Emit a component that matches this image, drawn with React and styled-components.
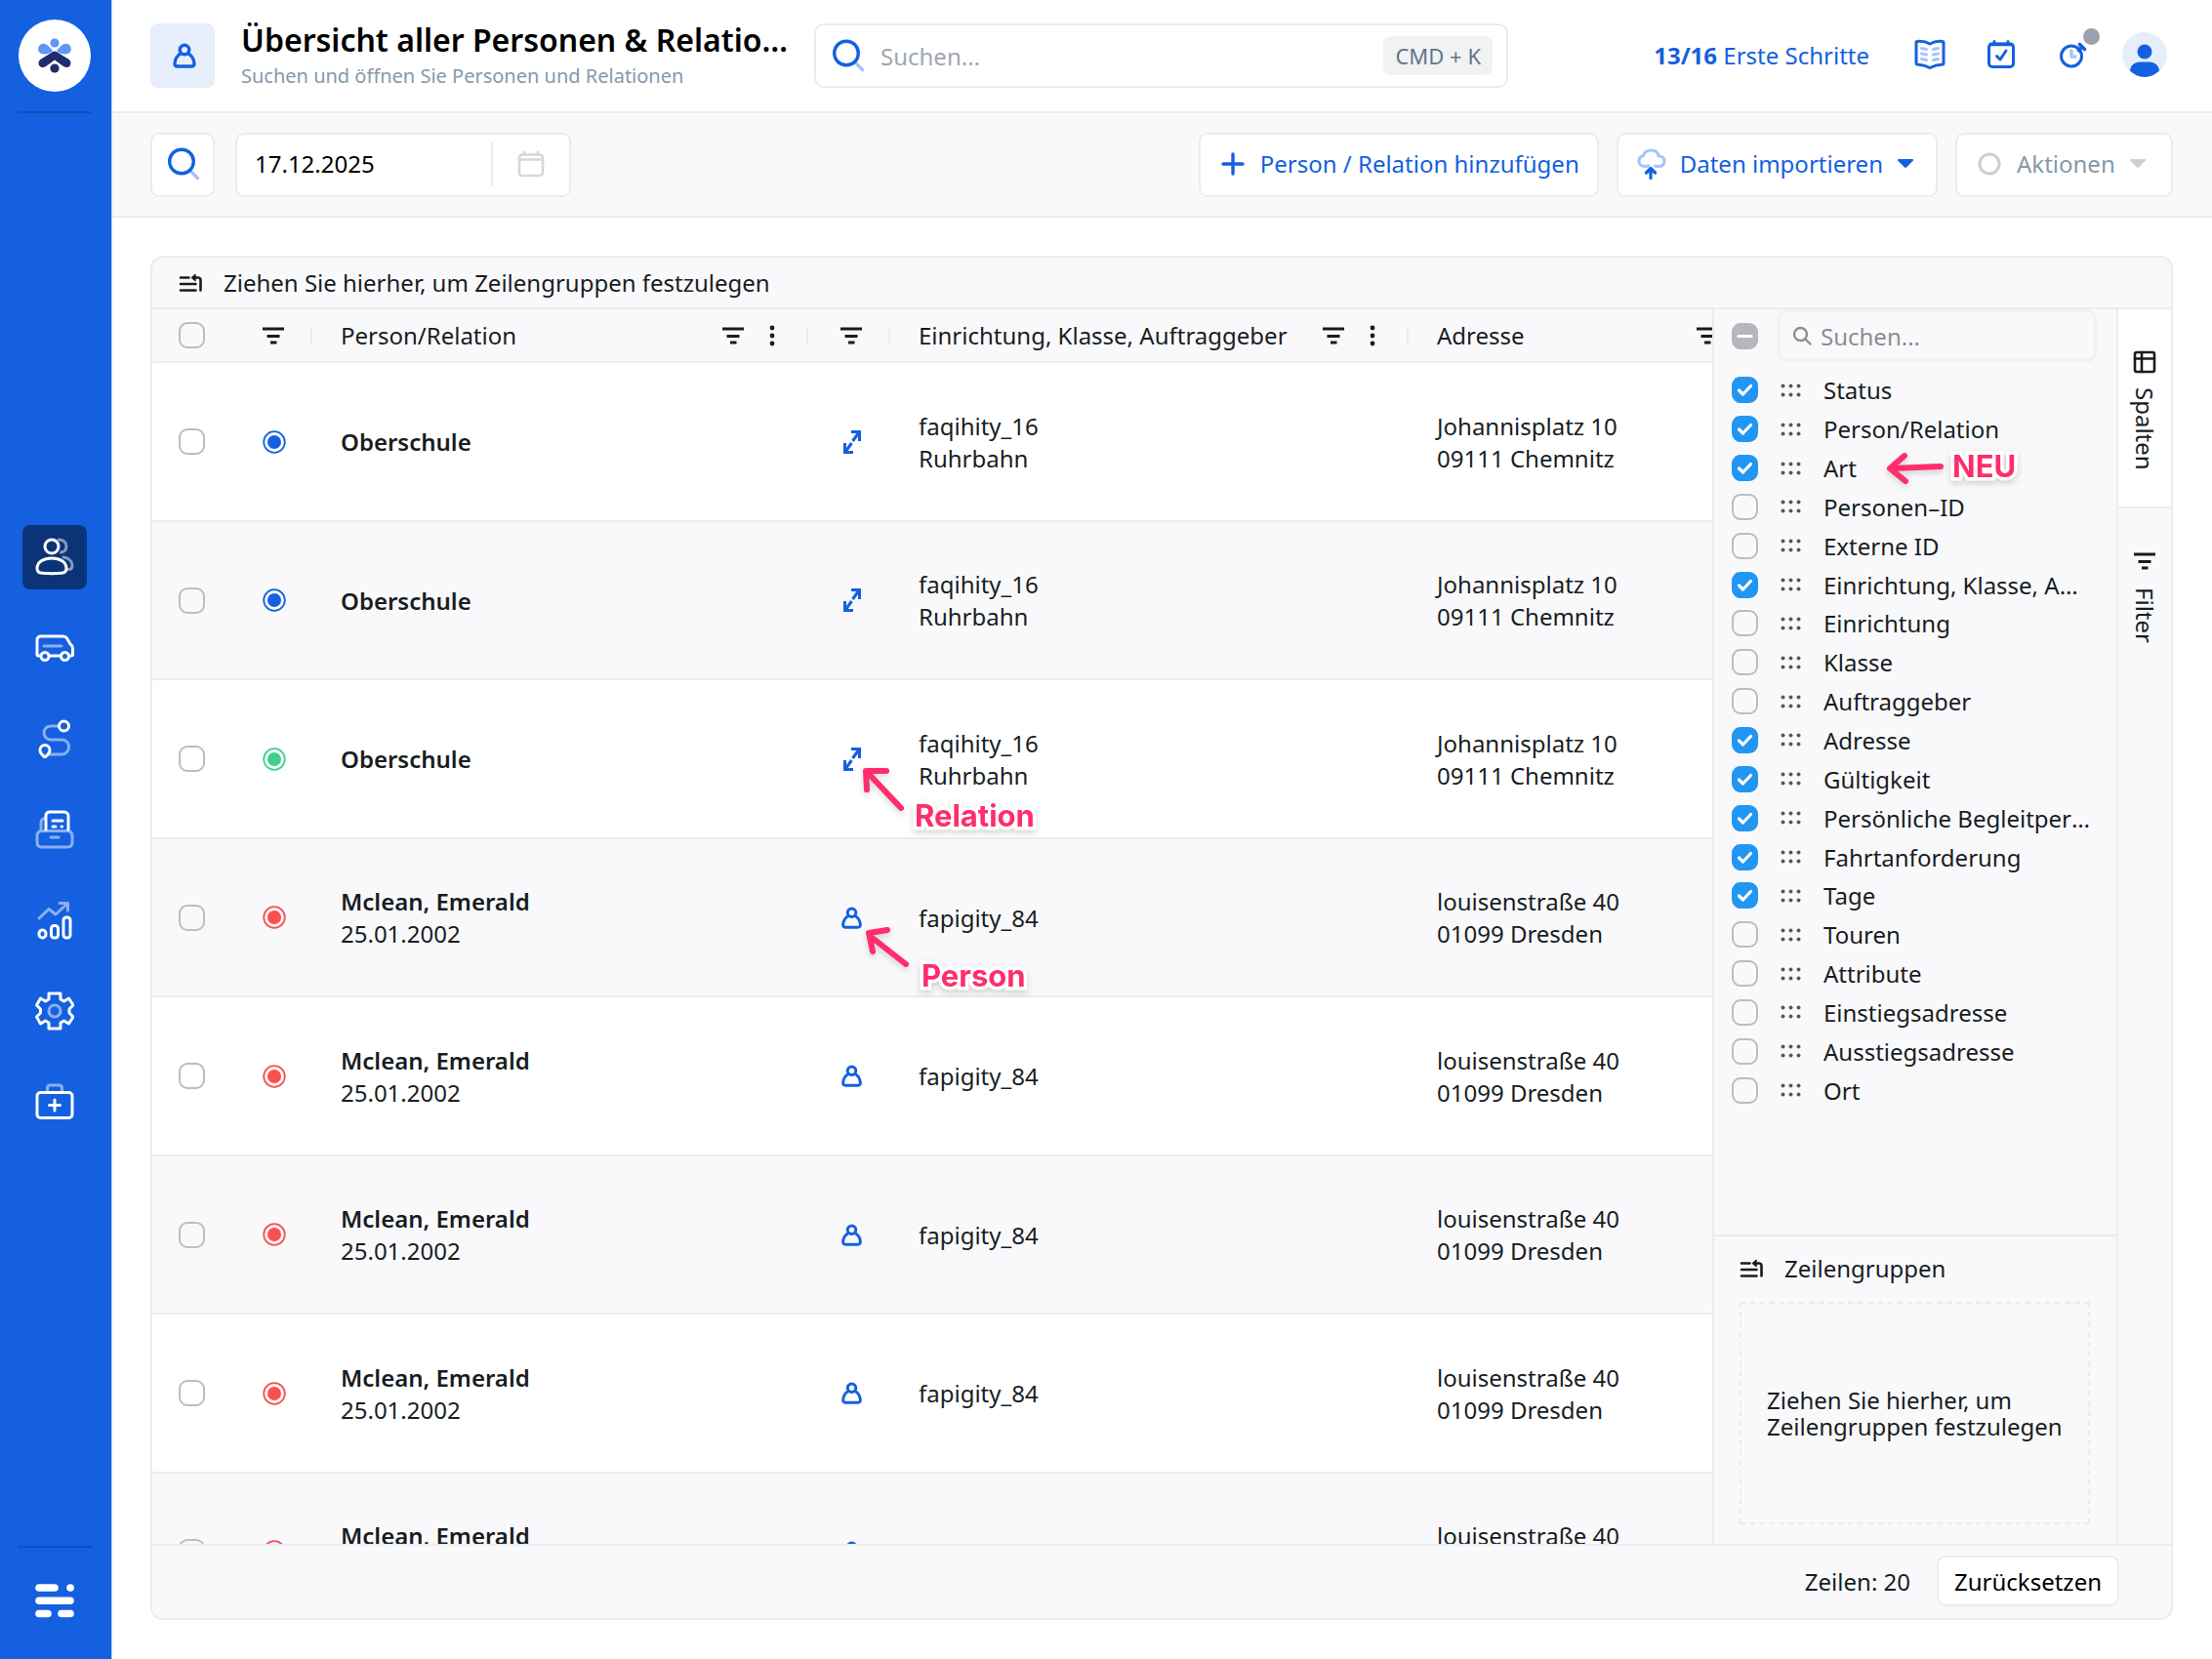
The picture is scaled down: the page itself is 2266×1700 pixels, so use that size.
import React from "react";
import styled, { createGlobalStyle, css } from "styled-components";

const blue = "#1460e0";
const softBlue = "#a7c4f8";
const ink = "#181d1f";
const line = "#ececef";
const panel = "#f9f9fb";
const muted = "#8598ab";
const pink = "#ff2d6b";

const GlobalStyle = createGlobalStyle`
  * {
    box-sizing: border-box;
  }
  body {
    margin: 0;
    background: #fff;
  }
  body,
  button,
  input {
    font-family: "Noto Sans", "Open Sans", sans-serif;
    font-size: 24px;
    line-height: 33px;
    color: ${ink};
  }
  button {
    cursor: pointer;
  }
  svg {
    display: block;
    flex: none;
  }
`;

const Page = styled.div`
  display: flex;
  height: 100vh;
  min-height: 1200px;
`;

// ---------- Sidebar ----------

const Sidebar = styled.aside`
  display: flex;
  flex-direction: column;
  align-items: center;
  flex: none;
  width: 115px;
  padding: 20px 2px 42px 0;
  background: ${blue};
  border-right: 1px solid #b9cff6;
`;

const LogoLink = styled.a`
  display: flex;
  align-items: center;
  justify-content: center;
  width: 74px;
  height: 74px;
  border-radius: 50%;
  background: #fff;
`;

const Rule = styled.hr`
  width: 76px;
  height: 2px;
  margin: 20px 0 0;
  border: 0;
  background: #114fb9;
`;

const Nav = styled.nav`
  display: flex;
  flex: 1;
  flex-direction: column;
  justify-content: center;
  gap: 27px;
  padding-top: 20px;
`;

const NavLink = styled.a`
  display: flex;
  align-items: center;
  justify-content: center;
  width: 66px;
  height: 66px;
  border-radius: 8px;
  background: ${(props) => (props.$active ? "#0b3478" : "transparent")};
`;

const MenuButton = styled.button`
  padding: 36px 0 0;
  border: 0;
  background: none;
`;

// ---------- Header ----------

const Main = styled.main`
  display: flex;
  flex: 1;
  flex-direction: column;
  min-width: 0;
`;

const Header = styled.header`
  display: flex;
  align-items: center;
  flex: none;
  height: 116px;
  padding: 0 46px 0 39px;
  border-bottom: 2px solid ${line};
`;

const PageIcon = styled.div`
  display: flex;
  align-items: center;
  justify-content: center;
  flex: none;
  width: 66px;
  height: 66px;
  margin-right: 27px;
  padding-left: 4px;
  border-radius: 8px;
  background: #e6eefb;
`;

const Titles = styled.div`
  width: 562px;
  margin-right: 25px;
  padding-bottom: 2px;
`;

const Title = styled.h1`
  overflow: hidden;
  margin: 0;
  font-size: 32px;
  font-weight: 600;
  line-height: 44px;
  color: #000;
  white-space: nowrap;
  text-overflow: ellipsis;
`;

const Subtitle = styled.p`
  margin: 0;
  font-size: 20px;
  line-height: 30px;
  color: ${muted};
  white-space: nowrap;
`;

const GlobalSearch = styled.label`
  display: flex;
  align-items: center;
  gap: 16px;
  width: 711px;
  height: 66px;
  padding: 0 14px 0 16px;
  border: 2px solid ${line};
  border-radius: 10px;
`;

const BareInput = styled.input`
  flex: 1;
  min-width: 0;
  padding: 0;
  border: 0;
  outline: 0;
  background: none;
  color: ${(props) => props.$color || ink};
  &::placeholder {
    color: ${(props) => props.$hint || "#a0a6b2"};
    opacity: 1;
  }
`;

const Kbd = styled.kbd`
  padding: 4px 12px;
  border-radius: 8px;
  background: #f0f2f4;
  font-family: inherit;
  font-size: 22px;
  line-height: 32px;
  color: #64748b;
`;

const HeaderActions = styled.div`
  display: flex;
  align-items: center;
  gap: 41px;
  margin-left: auto;
  padding-bottom: 2px;
`;

const StepsLink = styled.a`
  margin-right: 5px;
  color: ${blue};
  text-decoration: none;
  white-space: nowrap;
  strong {
    font-weight: 700;
  }
`;

const IconButton = styled.button`
  display: flex;
  align-items: center;
  justify-content: center;
  position: relative;
  width: 32px;
  height: 46px;
  padding: 0;
  border: 0;
  background: none;
  &:last-of-type {
    margin-right: -6px;
  }
`;

const Dot = styled.span`
  position: absolute;
  top: -4px;
  right: -12px;
  width: 17px;
  height: 17px;
  border-radius: 50%;
  background: #9ca1af;
`;

// ---------- Toolbar ----------

const Toolbar = styled.div`
  display: flex;
  align-items: center;
  flex: none;
  gap: 18px;
  height: 107px;
  padding: 0 40px 0 39px;
  border-bottom: 2px solid ${line};
  background: ${panel};
`;

const box = css`
  height: 66px;
  border: 2px solid ${line};
  border-radius: 9px;
  background: #fff;
`;

const ToolButton = styled.button`
  ${box}
  display: flex;
  align-items: center;
  gap: 14px;
  min-width: 223px;
  padding: 0 ${(props) => (props.$menu ? "22px" : "18px")} 2px 19px;
  color: ${(props) => (props.disabled ? muted : blue)};
  white-space: nowrap;
`;

const SquareButton = styled.button`
  ${box}
  display: flex;
  align-items: center;
  justify-content: center;
  width: 66px;
  padding: 0 0 2px 2px;
`;

const DateField = styled.label`
  ${box}
  display: flex;
  align-items: center;
  width: 344px;
  margin: 0 auto 0 3px;
  padding: 0 0 2px 18px;
`;

const DateIcon = styled.span`
  display: flex;
  justify-content: center;
  width: 80px;
  padding: 8px 0;
  border-left: 2px solid ${line};
`;

// ---------- Grid ----------

const Content = styled.section`
  display: flex;
  flex: 1;
  min-height: 0;
  padding: 39px 40px 40px 39px;
`;

const Card = styled.div`
  display: flex;
  flex: 1;
  flex-direction: column;
  min-width: 0;
  overflow: hidden;
  border: 2px solid ${line};
  border-radius: 13px;
  background: ${panel};
`;

const GroupBar = styled.div`
  display: flex;
  align-items: center;
  flex: none;
  gap: 21px;
  height: 53px;
  padding-left: 27px;
  border-bottom: 2px solid ${line};
`;

const GridBody = styled.div`
  display: flex;
  flex: 1;
  min-height: 0;
`;

const Viewport = styled.div`
  flex: 1;
  min-width: 0;
  overflow: hidden;
`;

const Table = styled.table`
  width: 1668px;
  border-spacing: 0;
  table-layout: fixed;
`;

const HeadCell = styled.th`
  height: 55px;
  padding: 0;
  border-bottom: 2px solid ${line};
  font-weight: 400;
  text-align: left;
`;

const HeadInner = styled.div`
  display: flex;
  align-items: center;
  justify-content: ${(props) => (props.$center ? "center" : "space-between")};
  height: 18px;
  padding: ${(props) => (props.$center ? "0" : "0 32px 0 29px")};
  padding-left: ${(props) => props.$center && props.$divided && "6px"};
  border-right: ${(props) => (props.$divided ? `2px solid ${line}` : "0")};
  white-space: nowrap;
`;

const HeadIcons = styled.span`
  display: flex;
  align-items: center;
  gap: 25px;
`;

const Row = styled.tr`
  height: 163px;
  background: #fff;
  &:nth-child(even) {
    height: 162px;
    background: ${panel};
  }
`;

const Cell = styled.td`
  padding: 0 0 0 29px;
  border-bottom: 2px solid ${line};
  vertical-align: middle;
`;

const CheckCell = styled(Cell)`
  padding: 0;
`;

const IconCell = styled(Cell)`
  padding: 0 0 0 5px;
`;

const Centered = styled.div`
  display: flex;
  justify-content: center;
  position: relative;
`;

const Strong = styled.strong`
  font-weight: 600;
`;

// ---------- Check box ----------

const CheckStack = styled.span`
  display: inline-grid;
  flex: none;
  vertical-align: middle;
  > * {
    grid-area: 1 / 1;
  }
  svg {
    z-index: 1;
    pointer-events: none;
  }
`;

const CheckInput = styled.input`
  appearance: none;
  width: 27px;
  height: 27px;
  margin: 0;
  border: 2px solid #bcbdc0;
  border-radius: 9px;
  background: transparent;
  &:checked {
    border-color: #2196f3;
    background: #2196f3;
  }
  &:indeterminate {
    border-color: #b6b7ba;
    background: #b6b7ba;
  }
`;

// ---------- Column panel ----------

const ColumnPanel = styled.div`
  display: flex;
  flex: none;
  flex-direction: column;
  width: 416px;
  border-left: 2px solid ${line};
  border-right: 2px solid ${line};
`;

const PanelSearchRow = styled.div`
  display: flex;
  align-items: center;
  flex: none;
  gap: 20px;
  height: 54px;
  padding: 0 20px 0 18px;
`;

const PanelSearch = styled.label`
  display: flex;
  align-items: center;
  flex: 1;
  gap: 9px;
  min-width: 0;
  height: 54px;
  padding: 0 12px;
  border: 3px solid #f0f1f3;
  border-radius: 9px;
`;

const ColumnList = styled.ul`
  display: grid;
  grid-auto-rows: 1fr;
  flex: none;
  height: 757px;
  margin: 9px 0 0;
  padding: 0 20px 0 18px;
  list-style: none;
`;

const ColumnItem = styled.li`
  display: flex;
  align-items: center;
  position: relative;
`;

const ColumnLabel = styled.label`
  display: flex;
  align-items: center;
  gap: 23px;
  min-width: 0;
`;

const ColumnName = styled.span`
  width: 275px;
  overflow: hidden;
  white-space: nowrap;
  text-overflow: ellipsis;
`;

const GroupSection = styled.div`
  display: flex;
  flex-direction: column;
  height: 317px;
  margin-top: auto;
  padding: 16px 27px 20px 26px;
  border-top: 2px solid ${line};
`;

const GroupTitle = styled.div`
  display: flex;
  align-items: center;
  gap: 21px;
`;

const DropZone = styled.div`
  display: flex;
  align-items: center;
  flex: 1;
  margin-top: 18px;
  padding: 0 26px;
  border: 2px dashed ${line};
  line-height: 27px;
`;

const Tabs = styled.div`
  flex: none;
  width: 54px;
`;

const Tab = styled.button`
  display: flex;
  align-items: center;
  gap: ${(props) => (props.$active ? "14px" : "18px")};
  width: 54px;
  height: ${(props) => (props.$active ? "204px" : "182px")};
  padding: ${(props) => (props.$active ? "42px" : "45px")} 0 0;
  border: 0;
  border-bottom: ${(props) => (props.$active ? `2px solid ${line}` : "0")};
  background: ${(props) => (props.$active ? "#fff" : "transparent")};
  writing-mode: vertical-rl;
`;

const Footer = styled.footer`
  display: flex;
  align-items: center;
  justify-content: flex-end;
  flex: none;
  gap: 27px;
  height: 76px;
  padding: 0 53px 2px 0;
  border-top: 2px solid ${line};
`;

const ResetButton = styled.button`
  height: 52px;
  padding: 0 16px;
  border: 2px solid ${line};
  border-radius: 9px;
  background: #fff;
  color: #000;
`;

// ---------- Callouts ----------

const Callout = styled.span`
  position: absolute;
  top: ${(props) => props.$top}px;
  left: ${(props) => props.$left}px;
  z-index: 1;
  filter: drop-shadow(0 3px 3px rgba(0, 0, 0, 0.16));
  pointer-events: none;
`;

const CalloutText = styled(Callout)`
  font-family: Inter, sans-serif;
  font-size: 31px;
  font-weight: 700;
  line-height: 38px;
  color: ${pink};
  paint-order: stroke fill;
  -webkit-text-stroke: 7px #fff;
`;

// ---------- Icons ----------

function Stroke({ w, h, color = "currentColor", width = 3, children, ...rest }) {
  return (
    <svg
      width={w}
      height={h}
      viewBox={`0 0 ${w} ${h}`}
      fill="none"
      stroke={color}
      strokeWidth={width}
      strokeLinecap="round"
      strokeLinejoin="round"
      aria-hidden="true"
      {...rest}
    >
      {children}
    </svg>
  );
}

const LogoMark = () => (
  <svg width="36" height="36" viewBox="0 0 36 36" aria-hidden="true">
    <g fill="#5f97f6">
      <circle cx="18" cy="5" r="4.6" />
      <path d="M3 7c3-2.500 7-1 9.500 2l3.500 4c-2 2.500-5.500 3.500-9 3.500C1 16.500-.5 10 3 7z" />
      <path d="M33 7c-3-2.500-7-1-9.500 2L20 13c2 2.500 5.500 3.500 9 3.500C35 16.500 36.500 10 33 7z" />
    </g>
    <g fill="#1f2b6c">
      <path d="M18 13.500c2 0 3 1 5 2.500l9 5.500c3 2 3 5 1.500 7-1.500 2-4.500 2-6.500.5L18 22.500 9 29c-2 1.500-5 1.500-6.500-.5S1 23.500 4 21.500L13 16c2-1.500 3-2.500 5-2.500z" />
      <circle cx="18" cy="31" r="4.600" />
    </g>
  </svg>
);

const PersonIcon = ({ w = 26 }) => (
  <svg width={w} height={w} viewBox="0 0 26 26" fill="none" stroke={blue} strokeWidth="3.400" strokeLinejoin="round" aria-hidden="true">
    <circle cx="13" cy="7" r="4.800" />
    <path d="M9.500 10.500C6 12.500 3.200 17 3 21c-.1 2 1 3 2.700 3h14.600c1.700 0 2.800-1 2.700-3-.2-4-3-8.500-6.500-10.500" />
  </svg>
);

const RelationIcon = () => (
  <Stroke w={18} h={26} color={blue} strokeLinejoin="miter" strokeLinecap="butt">
    <path d="M8 2.500h8.500V12M16 3l-6.500 9M10 23.500H1.500V14M2 23l6.500-9" />
  </Stroke>
);

const SearchIcon = ({ size = 34 }) => (
  <svg width={size} height={size} viewBox="0 0 34 34" fill="none" strokeWidth="3.400" strokeLinecap="round" aria-hidden="true">
    <path d="M24.500 24.500l7 7" stroke={softBlue} />
    <circle cx="15" cy="14.500" r="12.300" stroke={blue} />
  </svg>
);

const SmallSearchIcon = () => (
  <Stroke w={20} h={20} color="#8b8e91" width={2.4}>
    <circle cx="8.500" cy="8.500" r="6.500" />
    <path d="M13.500 13.500l5 5" />
  </Stroke>
);

const FilterIcon = () => (
  <Stroke w={24} h={18} width={2.8} strokeLinecap="butt">
    <path d="M1 2h22M5.500 9.500h13M9 16h6.500" />
  </Stroke>
);

const DotsIcon = () => (
  <svg width="6" height="22" viewBox="0 0 6 22" fill={ink} aria-hidden="true">
    <circle cx="3" cy="3" r="2.400" />
    <circle cx="3" cy="11" r="2.400" />
    <circle cx="3" cy="19" r="2.400" />
  </svg>
);

const GroupIcon = () => (
  <Stroke w={25} h={20} width={2.6}>
    <path d="M2 4.500h8.500M2 11h15.500M2 17.500h15.500M22.500 17.500V7c0-1.600-1-2.500-2.500-2.500h-3.500" />
    <path d="M13.500 4.500L17 1.500v6z" fill="currentColor" strokeWidth="1.500" />
  </Stroke>
);

const HandleIcon = () => (
  <svg width="21" height="14" viewBox="0 0 21 14" fill="#55595c" aria-hidden="true">
    {[2.5, 11.5].map((cy) => [2.5, 10.5, 18.5].map((cx) => <circle key={`${cx}-${cy}`} cx={cx} cy={cy} r="2" />))}
  </svg>
);

const StatusIcon = ({ color }) => (
  <svg width="24" height="24" viewBox="0 0 24 24" role="img" aria-label="Status">
    <circle cx="12" cy="12" r="10.800" fill="none" stroke={color} strokeWidth="1.800" />
    <circle cx="12" cy="12" r="7" fill={color} />
  </svg>
);

const Caret = ({ color }) => (
  <svg width="18" height="11" viewBox="0 0 18 11" fill={color} aria-hidden="true">
    <path d="M2 1h14c1 0 1.300 1 .7 1.700L10 9.500c-.6.600-1.400.600-2 0L1.300 2.700C.700 2 1 1 2 1z" />
  </svg>
);

const BookIcon = () => (
  <Stroke w={32} h={32} color={blue}>
    <path d="M16 5c-3.500-2-9-3-13-2.500-.8 0-1 .5-1 1.200v21c0 .8.300 1.200 1 1.300 4.500.3 9 1.300 13 3.500 4-2.200 8.500-3.200 13-3.500.7-.1 1-.5 1-1.300v-21c0-.7-.2-1.200-1-1.200C25 2 19.500 3 16 5z" />
    <path stroke={softBlue} d="M7.500 9.500l5 1M7.500 15l5 1M7.500 20.500l5 1M24.500 9.500l-5 1M24.500 15l-5 1M24.500 20.500l-5 1" />
  </Stroke>
);

const TaskIcon = () => (
  <Stroke w={30} h={32} color={blue}>
    <rect x="2.500" y="5" width="25" height="23.500" rx="3.500" />
    <path d="M8 5V2.500M22 5V2.500M10.500 17.500l3.500 3.500 6-9" />
    <path d="M4 5.500h22" strokeWidth="3.500" />
  </Stroke>
);

const TimerIcon = () => (
  <Stroke w={30} h={32} color={blue}>
    <circle cx="14" cy="17.500" r="10.500" />
    <path d="M22.500 5.500l5 5M25 8l-3.500 3.500" strokeWidth="3.600" />
    <path d="M14 12v6h4" stroke={softBlue} strokeWidth="3.400" />
  </Stroke>
);

const Avatar = () => (
  <svg width="46" height="46" viewBox="0 0 46 46" role="img" aria-label="Profil">
    <circle cx="23" cy="23" r="23" fill="#e6eefb" />
    <circle cx="23" cy="20" r="7.500" fill={blue} />
    <path d="M8 39.500C8.500 34 12.500 30.500 18 30.500h10c5.500 0 9.500 3.500 10 9A23 23 0 0 1 23 46a23 23 0 0 1-15-6.500z" fill={blue} />
  </svg>
);

const CalendarIcon = () => (
  <Stroke w={28} h={28} color="#d6d7d9" width={2.6}>
    <rect x="2" y="4.500" width="24" height="21.500" rx="3" />
    <path d="M7 4V1.500M21 4V1.500M2.500 9.500h23" />
  </Stroke>
);

const PlusIcon = () => (
  <Stroke w={28} h={26} color={blue} width={3.4}>
    <path d="M14 3v20M4 13h20" />
  </Stroke>
);

const CloudIcon = () => (
  <Stroke w={30} h={32} color={softBlue} width={3.2}>
    <path d="M8 18.500c-4 0-6-2.500-6-5.500s2-5 4.500-5.500C7.500 4 10.500 2 14.500 2c4.500 0 7 2.500 7.800 6 3.700.3 5.700 2.500 5.700 5.300 0 3-2.300 5.200-6 5.200-2 0-2.500-.5-3.500-.5M8 18.500c2 0 2.500-.5 3.500-.5" />
    <path d="M14 30.500V21M9.500 25l4.500-4.500 4.500 4.500" stroke={blue} />
  </Stroke>
);

const CircleIcon = () => (
  <Stroke w={28} h={26} color="#cfcfcf">
    <circle cx="14" cy="13" r="10" />
  </Stroke>
);

const ColumnsIcon = () => (
  <Stroke w={24} h={24} width={2.6}>
    <rect x="2" y="2" width="20" height="20" rx="2" />
    <path d="M2 8.500h20M9 2v20" />
  </Stroke>
);

const MenuIcon = () => (
  <Stroke w={40} h={36} color="#fff" width={7.6}>
    <path d="M4 5h16M36 5h.1M4 18.300h32M4 31.500h9M27 31.500h9" />
  </Stroke>
);

const navIcons = [
  {
    label: "Personen",
    icon: (
      <>
        <path opacity=".5" d="M24 2c5 0 8 3 8 6.500s-2 6-5.500 6.500M29 20c5 .5 9 4 9 8.500 0 2.500-1.500 4-4 4" />
        <circle cx="17" cy="9" r="7" />
        <path d="M17 21c-8.500 0-15 4-15 10.500 0 3 2 4.500 5 4.800 6.500.6 13.500.6 20 0 3-.3 5-1.800 5-4.800C32 25 25.500 21 17 21z" />
      </>
    ),
  },
  {
    label: "Fahrzeuge",
    icon: (
      <>
        <path d="M5.500 28H3.500C2.500 28 2 27.500 2 26.500V12c0-2.500 1.500-4 4-4h22c2 0 3.500.5 4.500 2l3.500 6c1.500 1 2.500 2 2.500 4v6.500c0 1-.5 1.500-1.500 1.500h-2M15 28h11" />
        <circle cx="10" cy="28.500" r="4" />
        <circle cx="30.500" cy="28.500" r="4" />
        <path opacity=".5" d="M9 18h18" />
      </>
    ),
  },
  {
    label: "Routen",
    icon: (
      <>
        <path opacity=".5" d="M23 7H16c-4 0-7 3-7 7s3 7 7 7h11c4.500 0 7.500 3 7.500 7.200S31.500 36 27 36H15" />
        <circle cx="29.500" cy="7" r="5" />
        <path d="M10 39c-2.500-2-5-4.500-5-7.500a5 5 0 0 1 10 0c0 3-2.500 5.500-5 7.500z" />
      </>
    ),
  },
  {
    label: "Dokumente",
    icon: (
      <>
        <path d="M11 20V6c0-2.500 1.500-4 4-4h14c2.500 0 5 1.500 5 4v14M18 11h10M18 17h3M27 17h.5" />
        <path opacity=".5" d="M6 20v-7c0-2 1.500-4 4-4.500M2 27c0-3.500 1.500-5.500 5-5.500h26c3.500 0 5 2 5 5.500v6c0 3-1.500 5-5 5H7c-3.500 0-5-2-5-5zM16 28h8" />
      </>
    ),
  },
  {
    label: "Auswertungen",
    icon: (
      <>
        <path opacity=".5" d="M4 18l10-9.500 7 5.500L33 3M25 2.500h8.500V10" />
        <rect x="4" y="30" width="7" height="8" rx="3.500" />
        <rect x="16.500" y="25.500" width="7" height="12.500" rx="3" />
        <rect x="29" y="17" width="7" height="21" rx="3" />
      </>
    ),
  },
  {
    label: "Einstellungen",
    icon: (
      <>
        <path d="M14 2h12v6l3.500 2 5-3 4.500 7-4 4v4l4 4-4.500 7-5-3-3.500 2v6H14v-6l-3.500-2-5 3L1.500 26l4-4v-4l-4-4L5.500 7l5 3L14 8z" />
        <circle cx="20" cy="20" r="6" opacity=".5" />
      </>
    ),
  },
  {
    label: "Support",
    icon: (
      <>
        <rect x="2" y="10.500" width="36" height="26" rx="3.500" />
        <path opacity=".5" d="M12.500 10V6c0-2 1-3 3-3h9c2 0 3 1 3 3v4" />
        <path d="M20 18v11M14.500 23.500h11" />
      </>
    ),
  },
];

// ---------- Data ----------

const columns = [
  ["Status", true],
  ["Person/Relation", true],
  ["Art", true],
  ["Personen–ID", false],
  ["Externe ID", false],
  ["Einrichtung, Klasse, Auftraggeber", true],
  ["Einrichtung", false],
  ["Klasse", false],
  ["Auftraggeber", false],
  ["Adresse", true],
  ["Gültigkeit", true],
  ["Persönliche Begleitperson", true],
  ["Fahrtanforderung", true],
  ["Tage", true],
  ["Touren", false],
  ["Attribute", false],
  ["Einstiegsadresse", false],
  ["Ausstiegsadresse", false],
  ["Ort", false],
];

const school = {
  name: "Oberschule",
  relation: true,
  place: ["faqihity_16", "Ruhrbahn"],
  address: ["Johannisplatz 10", "09111 Chemnitz"],
};

const person = {
  name: "Mclean, Emerald",
  born: "25.01.2002",
  color: "#fb4f4b",
  place: ["fapigity_84"],
  address: ["louisenstraße 40", "01099 Dresden"],
};

const rows = [
  { ...school, color: blue },
  { ...school, color: blue },
  { ...school, color: "#3ecf8e", callout: "Relation" },
  { ...person, callout: "Person" },
  person,
  person,
  person,
  person,
];

// ---------- Parts ----------

function CheckBox({ mixed, ...rest }) {
  const ref = (el) => {
    if (el && mixed) el.indeterminate = true;
  };
  return (
    <CheckStack>
      <CheckInput type="checkbox" ref={ref} {...rest} />
      {(mixed || rest.defaultChecked) && (
        <Stroke w={27} h={27} color="#fff" width={3.2}>
          <path d={mixed ? "M7 13.500h13" : "M7.500 14l4 4 8-8.500"} />
        </Stroke>
      )}
    </CheckStack>
  );
}

function RowCallout({ text }) {
  const relation = text === "Relation";
  return (
    <>
      <Callout $top={relation ? 19 : 16} $left={relation ? 46 : 49}>
        <Stroke w={54} h={50} color={pink} width={6}>
          <path d={relation ? "M44 44L10 8M29 6L8 6L9 25" : "M46 43L9 14M27 8L8 11L12 30"} />
        </Stroke>
      </Callout>
      <CalloutText $top={52} $left={relation ? 104 : 111}>
        {text}
      </CalloutText>
    </>
  );
}

function DataRow({ row }) {
  return (
    <Row>
      <CheckCell>
        <Centered>
          <CheckBox aria-label={`${row.name} auswählen`} />
        </Centered>
      </CheckCell>
      <IconCell>
        <Centered>
          <StatusIcon color={row.color} />
        </Centered>
      </IconCell>
      <Cell>
        <Strong>{row.name}</Strong>
        {row.born && <div>{row.born}</div>}
      </Cell>
      <IconCell>
        <Centered>
          {row.relation ? <RelationIcon /> : <PersonIcon w={23} />}
          {row.callout && <RowCallout text={row.callout} />}
        </Centered>
      </IconCell>
      <Cell>
        {row.place.map((text) => (
          <div key={text}>{text}</div>
        ))}
      </Cell>
      <Cell>
        {row.address.map((text) => (
          <div key={text}>{text}</div>
        ))}
      </Cell>
    </Row>
  );
}

function DataGrid() {
  return (
    <Viewport>
      <Table>
        <colgroup>
          <col style={{ width: 80 }} />
          <col style={{ width: 84 }} />
          <col style={{ width: 508 }} />
          <col style={{ width: 84 }} />
          <col style={{ width: 531 }} />
          <col />
        </colgroup>
        <thead>
          <tr>
            <HeadCell>
              <HeadInner $center>
                <CheckBox aria-label="Alle auswählen" />
              </HeadInner>
            </HeadCell>
            <HeadCell>
              <HeadInner $center $divided>
                <FilterIcon />
              </HeadInner>
            </HeadCell>
            <HeadCell>
              <HeadInner $divided>
                Person/Relation
                <HeadIcons>
                  <FilterIcon />
                  <DotsIcon />
                </HeadIcons>
              </HeadInner>
            </HeadCell>
            <HeadCell>
              <HeadInner $center $divided>
                <FilterIcon />
              </HeadInner>
            </HeadCell>
            <HeadCell>
              <HeadInner $divided>
                Einrichtung, Klasse, Auftraggeber
                <HeadIcons>
                  <FilterIcon />
                  <DotsIcon />
                </HeadIcons>
              </HeadInner>
            </HeadCell>
            <HeadCell>
              <HeadInner>
                Adresse
                <HeadIcons>
                  <FilterIcon />
                  <DotsIcon />
                </HeadIcons>
              </HeadInner>
            </HeadCell>
          </tr>
        </thead>
        <tbody>
          {rows.map((row, i) => (
            <DataRow key={i} row={row} />
          ))}
        </tbody>
      </Table>
    </Viewport>
  );
}

function SidePanel() {
  return (
    <ColumnPanel>
      <PanelSearchRow>
        <CheckBox mixed aria-label="Alle Spalten" />
        <PanelSearch>
          <SmallSearchIcon />
          <BareInput placeholder="Suchen..." aria-label="Spalten suchen" $hint="#8b8e91" />
        </PanelSearch>
      </PanelSearchRow>
      <ColumnList>
        {columns.map(([name, checked]) => (
          <ColumnItem key={name}>
            <ColumnLabel>
              <CheckBox defaultChecked={checked} />
              <HandleIcon />
              <ColumnName>{name}</ColumnName>
            </ColumnLabel>
            {name === "Art" && (
              <>
                <Callout $top={-1} $left={156}>
                  <Stroke w={68} h={40} color={pink} width={6}>
                    <path d="M58 19L7 21M21 8L6 21L22 34" />
                  </Stroke>
                </Callout>
                <CalloutText $top={-1} $left={226}>
                  NEU
                </CalloutText>
              </>
            )}
          </ColumnItem>
        ))}
      </ColumnList>
      <GroupSection>
        <GroupTitle>
          <GroupIcon />
          Zeilengruppen
        </GroupTitle>
        <DropZone>Ziehen Sie hierher, um Zeilengruppen festzulegen</DropZone>
      </GroupSection>
    </ColumnPanel>
  );
}

export default function App() {
  return (
    <Page>
      <GlobalStyle />
      <Sidebar>
        <LogoLink href="#" aria-label="Startseite">
          <LogoMark />
        </LogoLink>
        <Rule />
        <Nav>
          {navIcons.map(({ label, icon }, i) => (
            <NavLink key={label} href="#" aria-label={label} $active={i === 0}>
              <Stroke w={40} h={40} color="#fff">
                {icon}
              </Stroke>
            </NavLink>
          ))}
        </Nav>
        <Rule />
        <MenuButton aria-label="Menü">
          <MenuIcon />
        </MenuButton>
      </Sidebar>

      <Main>
        <Header>
          <PageIcon>
            <PersonIcon />
          </PageIcon>
          <Titles>
            <Title>Übersicht aller Personen & Relationen</Title>
            <Subtitle>Suchen und öffnen Sie Personen und Relationen</Subtitle>
          </Titles>
          <GlobalSearch>
            <SearchIcon />
            <BareInput placeholder="Suchen..." aria-label="Suchen" />
            <Kbd>CMD + K</Kbd>
          </GlobalSearch>
          <HeaderActions>
            <StepsLink href="#">
              <strong>13/16</strong> Erste Schritte
            </StepsLink>
            <IconButton aria-label="Handbuch">
              <BookIcon />
            </IconButton>
            <IconButton aria-label="Aufgaben">
              <TaskIcon />
            </IconButton>
            <IconButton aria-label="Verlauf">
              <TimerIcon />
              <Dot />
            </IconButton>
            <Avatar />
          </HeaderActions>
        </Header>

        <Toolbar>
          <SquareButton aria-label="Suche öffnen">
            <SearchIcon />
          </SquareButton>
          <DateField>
            <BareInput defaultValue="17.12.2025" aria-label="Datum" $color="#000" />
            <DateIcon>
              <CalendarIcon />
            </DateIcon>
          </DateField>
          <ToolButton>
            <PlusIcon />
            Person / Relation hinzufügen
          </ToolButton>
          <ToolButton $menu>
            <CloudIcon />
            Daten importieren
            <Caret color={blue} />
          </ToolButton>
          <ToolButton $menu disabled>
            <CircleIcon />
            Aktionen
            <Caret color="#cfcfcf" />
          </ToolButton>
        </Toolbar>

        <Content>
          <Card>
            <GroupBar>
              <GroupIcon />
              Ziehen Sie hierher, um Zeilengruppen festzulegen
            </GroupBar>
            <GridBody>
              <DataGrid />
              <SidePanel />
              <Tabs>
                <Tab $active>
                  <ColumnsIcon />
                  Spalten
                </Tab>
                <Tab>
                  <FilterIcon />
                  Filter
                </Tab>
              </Tabs>
            </GridBody>
            <Footer>
              Zeilen: 20
              <ResetButton>Zurücksetzen</ResetButton>
            </Footer>
          </Card>
        </Content>
      </Main>
    </Page>
  );
}
